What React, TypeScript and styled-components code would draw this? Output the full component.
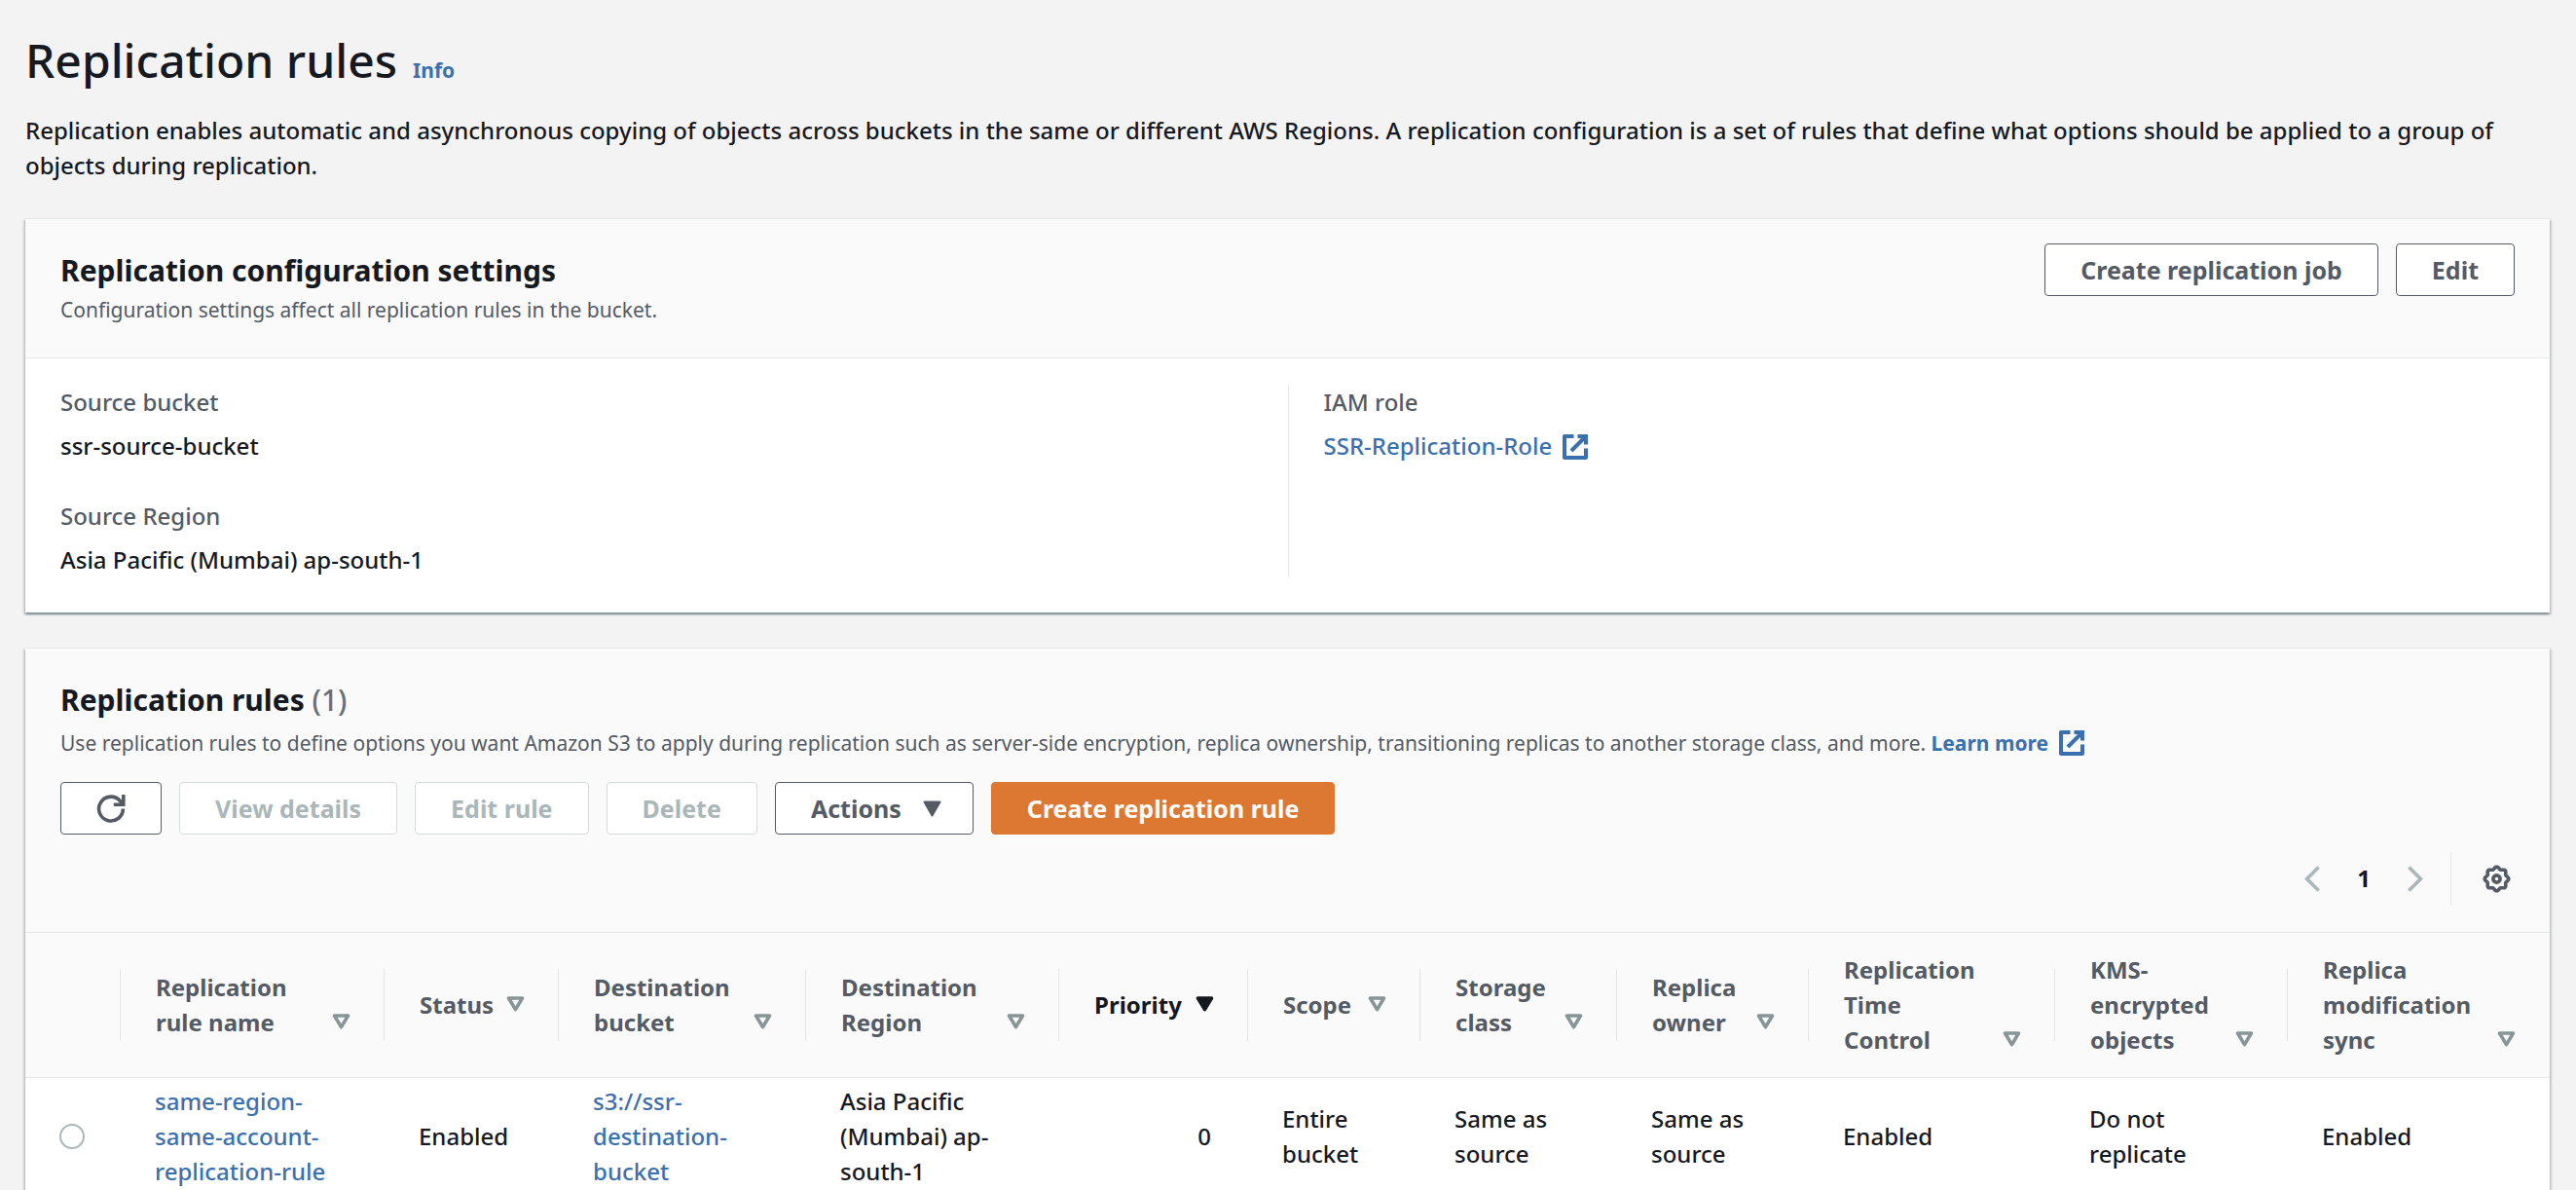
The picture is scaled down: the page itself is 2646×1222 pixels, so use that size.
import React from "react";
import styled, { createGlobalStyle, css } from "styled-components";

const color = {
  page: "#f3f3f3",
  header: "#fafafa",
  text: "#16191f",
  muted: "#545b64",
  count: "#687078",
  disabled: "#aab7b8",
  disabledBorder: "#d5dbdb",
  sort: "#879596",
  line: "#e4e7e7",
  link: "#3b70ae",
  accent: "#dd7832",
};

const GlobalStyle = createGlobalStyle`
  *, *::before, *::after { box-sizing: border-box; }
  body {
    margin: 0;
    background: ${color.page};
    color: ${color.text};
    font-family: "Noto Sans", "Open Sans", sans-serif;
    font-size: 24px;
    font-weight: 500;
    line-height: 36px;
  }
`;

/* ---------- layout ---------- */

const Page = styled.main`
  display: flex;
  flex-direction: column;
  gap: 36px;
  padding: 32px 27px 0 26px;
`;

const Intro = styled.header`
  display: flex;
  flex-direction: column;
  gap: 24px;
`;

const TitleRow = styled.div`
  display: flex;
  align-items: baseline;
  gap: 16px;
`;

const Title = styled.h1`
  margin: 0;
  font-size: 48px;
  font-weight: 500;
  line-height: 60px;
`;

const Lead = styled.p`
  margin: 0;
`;

const Card = styled.section`
  background: #fff;
  border-top: 1px solid ${color.line};
  box-shadow:
    0 2px 2px 0 rgba(0, 28, 36, 0.3),
    2px 2px 2px 0 rgba(0, 28, 36, 0.15),
    -2px 2px 2px 0 rgba(0, 28, 36, 0.15);
`;

const CardHeader = styled.div`
  display: flex;
  justify-content: space-between;
  align-items: flex-start;
  padding: 25px 36px 33px;
  background: ${color.header};
  border-bottom: 1px solid ${color.line};
`;

const TableCardHeader = styled(CardHeader)`
  flex-direction: column;
  align-items: stretch;
  gap: 24px;
  padding-bottom: 28px;
`;

const Heading = styled.div<{ $gap: number }>`
  display: flex;
  flex-direction: column;
  gap: ${(p) => p.$gap}px;
  padding-top: 8px;
`;

const CardTitle = styled.h2`
  margin: 0;
  font-size: 30px;
  font-weight: 700;
  line-height: 40px;
`;

const Count = styled.span`
  color: ${color.count};
  font-weight: 500;
`;

const Description = styled.p`
  margin: 0;
  color: ${color.muted};
  font-size: 21px;
  font-weight: 400;
  line-height: 32px;
`;

const Link = styled.a<{ $strong?: boolean }>`
  color: ${color.link};
  text-decoration: none;
  font-weight: ${(p) => (p.$strong ? 700 : "inherit")};
`;

const InfoLink = styled(Link)`
  font-size: 21px;
  line-height: 32px;
`;

/* ---------- buttons ---------- */

const Actions = styled.div`
  display: flex;
  flex-wrap: wrap;
  gap: 18px;
`;

const Button = styled.button<{ $primary?: boolean }>`
  display: inline-flex;
  align-items: center;
  gap: 22px;
  padding: 8px 36px;
  border: 1px solid ${color.muted};
  border-radius: 4px;
  background: #fff;
  color: ${color.muted};
  font: inherit;
  font-size: 25px;
  font-weight: 700;
  line-height: 36px;

  &:disabled {
    border-color: ${color.disabledBorder};
    color: ${color.disabled};
  }

  ${(p) =>
    p.$primary &&
    css`
      border-color: ${color.accent};
      background: ${color.accent};
      color: #fff;
    `}
`;

const MenuButton = styled(Button)`
  padding-right: 32px;
`;

const IconButton = styled.button`
  display: inline-flex;
  padding: 0;
  border: 0;
  background: none;
  color: ${color.muted};

  &:disabled {
    color: ${color.disabled};
  }
`;

/* ---------- settings ---------- */

const Settings = styled.div`
  display: grid;
  grid-template-columns: 1fr 1fr;
  padding: 27px 36px 36px;
`;

const SettingsColumn = styled.dl`
  display: flex;
  flex-direction: column;
  gap: 36px;
  margin: 0;

  & + & {
    padding-left: 36px;
    border-left: 1px solid ${color.line};
  }
`;

const Field = styled.div`
  display: flex;
  flex-direction: column;
  gap: 9px;
`;

const FieldLabel = styled.dt`
  color: ${color.muted};
`;

const FieldValue = styled.dd`
  margin: 0;
`;

/* ---------- table toolbar ---------- */

const Toolbar = styled.div`
  display: flex;
  flex-direction: column;
  gap: 18px;
`;

const TableTools = styled.div`
  display: flex;
  justify-content: flex-end;
  align-items: center;
  height: 54px;
  padding-right: 4px;
`;

const Pagination = styled.nav`
  display: flex;
  align-items: center;
  align-self: stretch;
  gap: 38px;
  padding-right: 28px;
  border-right: 1px solid ${color.line};
  margin-right: 32px;
`;

const PageNumber = styled.span`
  font-weight: 700;
`;

/* ---------- table ---------- */

const Table = styled.table`
  width: 100%;
  table-layout: fixed;
  border-collapse: separate;
  border-spacing: 0;
`;

const Col = styled.col<{ $w: number }>`
  width: ${(p) => p.$w}px;
`;

const HeadCell = styled.th`
  padding: 20px 35px 20px 36px;
  border-bottom: 1px solid ${color.line};
  background: linear-gradient(${color.line}, ${color.line}) right center / 1px 50% no-repeat ${color.header};
  text-align: left;
  vertical-align: middle;

  &:last-child {
    background: ${color.header};
  }
`;

const SortButton = styled.button<{ $active?: boolean }>`
  display: flex;
  justify-content: space-between;
  align-items: flex-end;
  gap: 12px;
  width: 100%;
  padding: 0;
  border: 0;
  background: none;
  color: ${(p) => (p.$active ? color.text : color.muted)};
  font: inherit;
  font-weight: 700;
  text-align: left;

  svg {
    flex: none;
    margin-bottom: 11px;
  }
`;

const Cell = styled.td<{ $right?: boolean }>`
  padding: 6px 38px 6px 35px;
  border-bottom: 1px solid ${color.line};
  text-align: ${(p) => (p.$right ? "right" : "left")};
  vertical-align: middle;
`;

const Radio = styled.input`
  display: block;
  appearance: none;
  width: 26px;
  height: 26px;
  margin: 0;
  border: 2px solid ${color.disabled};
  border-radius: 50%;
  background: #fff;
`;

/* ---------- icons ---------- */

const InlineIcon = styled.svg`
  margin-left: 11px;
  vertical-align: -5px;
`;

const ExternalIcon = () => (
  <InlineIcon width="26" height="26" viewBox="0 0 26 26" fill="none" stroke="currentColor" strokeWidth="4" strokeLinejoin="round" aria-hidden="true">
    <path d="M11.5 2H2V24H24V14.5" />
    <path d="M15.5 2H24V10.5" strokeLinejoin="miter" />
    <path d="M9 17L23 3" />
  </InlineIcon>
);

const RefreshIcon = () => (
  <svg width="30" height="30" viewBox="0 0 30 30" fill="none" stroke="currentColor" strokeWidth="3.6" aria-hidden="true">
    <path d="M27.4 15.5A12.4 12.4 0 1 1 24.6 7.7L27 10.4" />
    <path d="M27.8 1V11.2H17.8" />
  </svg>
);

const CaretIcon = () => (
  <svg width="19" height="17" viewBox="0 0 19 17" fill="currentColor" stroke="currentColor" strokeWidth="2" strokeLinejoin="round" aria-hidden="true">
    <path d="M1.5 1.5H17.5L9.5 15.5Z" />
  </svg>
);

const SortIcon = ({ filled }: { filled?: boolean }) => (
  <svg
    width="19"
    height="16"
    viewBox="0 0 19 16"
    fill={filled ? "currentColor" : "none"}
    stroke={filled ? "currentColor" : color.sort}
    strokeWidth="3.6"
    strokeLinejoin="round"
    aria-hidden="true"
  >
    <path d="M2.5 2H16.5L9.5 13.6Z" />
  </svg>
);

const PreviousIcon = () => (
  <svg width="16" height="27" viewBox="0 0 16 27" fill="none" stroke="currentColor" strokeWidth="3.6" aria-hidden="true">
    <path d="M14.6 1.5L2.6 13.5L14.6 25.5" />
  </svg>
);

const NextIcon = () => (
  <svg width="16" height="27" viewBox="0 0 16 27" fill="none" stroke="currentColor" strokeWidth="3.6" aria-hidden="true">
    <path d="M1.4 1.5L13.4 13.5L1.4 25.5" />
  </svg>
);

const gearOutline = Array.from({ length: 96 }, (_, i) => {
  const angle = (i / 96) * Math.PI * 2;
  const radius = 11.2 + 1.1 * Math.cos(8 * angle);
  return `${(14.5 + radius * Math.cos(angle)).toFixed(2)},${(14.5 + radius * Math.sin(angle)).toFixed(2)}`;
}).join(" ");

const GearIcon = () => (
  <svg width="29" height="29" viewBox="0 0 29 29" fill="none" stroke="currentColor" strokeWidth="3.6" strokeLinejoin="round" aria-hidden="true">
    <polygon points={gearOutline} />
    <circle cx="14.5" cy="14.5" r="3.6" />
  </svg>
);

/* ---------- data ---------- */

type Column = { label: string; width: number; active?: boolean };

const columns: Column[] = [
  { label: "Replication rule name", width: 271 },
  { label: "Status", width: 179 },
  { label: "Destination bucket", width: 254 },
  { label: "Destination Region", width: 260 },
  { label: "Priority", width: 194, active: true },
  { label: "Scope", width: 177 },
  { label: "Storage class", width: 202 },
  { label: "Replica owner", width: 197 },
  { label: "Replication Time Control", width: 253 },
  { label: "KMS-encrypted objects", width: 239 },
  { label: "Replica modification sync", width: 269 },
];

export default function App() {
  return (
    <>
      <GlobalStyle />
      <Page>
        <Intro>
          <TitleRow>
            <Title>Replication rules</Title>
            <InfoLink href="#info" $strong>
              Info
            </InfoLink>
          </TitleRow>
          <Lead>
            Replication enables automatic and asynchronous copying of objects across buckets in the same or different
            AWS Regions. A replication configuration is a set of rules that define what options should be applied to a
            group of objects during replication.
          </Lead>
        </Intro>

        <Card>
          <CardHeader>
            <Heading $gap={4}>
              <CardTitle>Replication configuration settings</CardTitle>
              <Description>Configuration settings affect all replication rules in the bucket.</Description>
            </Heading>
            <Actions>
              <Button type="button">Create replication job</Button>
              <Button type="button">Edit</Button>
            </Actions>
          </CardHeader>
          <Settings>
            <SettingsColumn>
              <Field>
                <FieldLabel>Source bucket</FieldLabel>
                <FieldValue>ssr-source-bucket</FieldValue>
              </Field>
              <Field>
                <FieldLabel>Source Region</FieldLabel>
                <FieldValue>Asia Pacific (Mumbai) ap-south-1</FieldValue>
              </Field>
            </SettingsColumn>
            <SettingsColumn>
              <Field>
                <FieldLabel>IAM role</FieldLabel>
                <FieldValue>
                  <Link href="#role">
                    SSR-Replication-Role
                    <ExternalIcon />
                  </Link>
                </FieldValue>
              </Field>
            </SettingsColumn>
          </Settings>
        </Card>

        <Card>
          <TableCardHeader>
            <Heading $gap={8}>
              <CardTitle>
                Replication rules <Count>(1)</Count>
              </CardTitle>
              <Description>
                Use replication rules to define options you want Amazon S3 to apply during replication such as
                server-side encryption, replica ownership, transitioning replicas to another storage class, and more.{" "}
                <Link href="#learn-more" $strong>
                  Learn more
                  <ExternalIcon />
                </Link>
              </Description>
            </Heading>
            <Toolbar>
              <Actions>
                <Button type="button" aria-label="Refresh">
                  <RefreshIcon />
                </Button>
                <Button type="button" disabled>
                  View details
                </Button>
                <Button type="button" disabled>
                  Edit rule
                </Button>
                <Button type="button" disabled>
                  Delete
                </Button>
                <MenuButton type="button" aria-haspopup="menu">
                  Actions
                  <CaretIcon />
                </MenuButton>
                <Button type="button" $primary>
                  Create replication rule
                </Button>
              </Actions>
              <TableTools>
                <Pagination aria-label="Pagination">
                  <IconButton type="button" aria-label="Previous page" disabled>
                    <PreviousIcon />
                  </IconButton>
                  <PageNumber aria-current="page">1</PageNumber>
                  <IconButton type="button" aria-label="Next page" disabled>
                    <NextIcon />
                  </IconButton>
                </Pagination>
                <IconButton type="button" aria-label="Preferences">
                  <GearIcon />
                </IconButton>
              </TableTools>
            </Toolbar>
          </TableCardHeader>

          <Table>
            <colgroup>
              <Col $w={98} />
              {columns.map((column) => (
                <Col key={column.label} $w={column.width} />
              ))}
            </colgroup>
            <thead>
              <tr>
                <HeadCell scope="col" aria-label="Selection" />
                {columns.map((column) => (
                  <HeadCell key={column.label} scope="col" aria-sort={column.active ? "descending" : undefined}>
                    <SortButton type="button" $active={column.active}>
                      {column.label}
                      <SortIcon filled={column.active} />
                    </SortButton>
                  </HeadCell>
                ))}
              </tr>
            </thead>
            <tbody>
              <tr>
                <Cell>
                  <Radio type="radio" name="rule" aria-label="same-region-same-account-replication-rule" />
                </Cell>
                <Cell>
                  <Link href="#rule">same-region-same-account-replication-rule</Link>
                </Cell>
                <Cell>Enabled</Cell>
                <Cell>
                  <Link href="#destination">s3://ssr-destination-bucket</Link>
                </Cell>
                <Cell>Asia Pacific (Mumbai) ap-south-1</Cell>
                <Cell $right>0</Cell>
                <Cell>Entire bucket</Cell>
                <Cell>Same as source</Cell>
                <Cell>Same as source</Cell>
                <Cell>Enabled</Cell>
                <Cell>Do not replicate</Cell>
                <Cell>Enabled</Cell>
              </tr>
            </tbody>
          </Table>
        </Card>
      </Page>
    </>
  );
}
